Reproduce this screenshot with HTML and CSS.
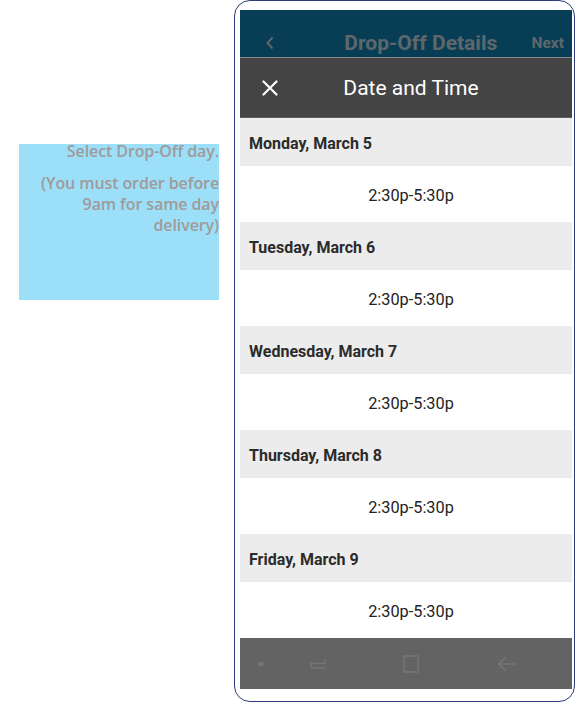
FILE: index.html
```html
<!DOCTYPE html>
<html>
<head>
<meta charset="utf-8">
<link rel="stylesheet" href="styles.css">
</head>
<body>
<div class="page">
  <aside class="note">
    <p class="note-title">Select Drop-Off day.</p>
    <p class="note-body">(You must order before 9am for same day delivery)</p>
  </aside>
  <div class="phone">
    <div class="screen">
      <div class="appbar">
        <svg class="appbar-back" width="12" height="16" viewBox="0 0 12 16"><path d="M8.5 2.5 L3.5 8 L8.5 13.5" stroke="#5e686c" stroke-width="2" fill="none"/></svg>
        <span class="appbar-title">Drop-Off Details</span>
        <span class="appbar-next">Next</span>
      </div>
      <div class="sheet-head">
        <svg class="close" width="16" height="16" viewBox="0 0 16 16"><path d="M1.5 1.5 L14.5 14.5 M14.5 1.5 L1.5 14.5" stroke="#fff" stroke-width="2.2" stroke-linecap="round"/></svg>
        <span class="sheet-title">Date and Time</span>
      </div>
      <div class="list">
        <div class="day">Monday, March 5</div>
        <div class="slot">2:30p-5:30p</div>
        <div class="day">Tuesday, March 6</div>
        <div class="slot">2:30p-5:30p</div>
        <div class="day">Wednesday, March 7</div>
        <div class="slot">2:30p-5:30p</div>
        <div class="day">Thursday, March 8</div>
        <div class="slot">2:30p-5:30p</div>
        <div class="day">Friday, March 9</div>
        <div class="slot">2:30p-5:30p</div>
      </div>
      <div class="navbar">
        <svg width="10" height="10" viewBox="0 0 10 10"><circle cx="5" cy="5" r="2.6" fill="#747474"/></svg>
        <svg width="22" height="20" viewBox="0 0 22 20"><path d="M4 14 L4 9.5 L18 9.5 L18 5 M4 14 L18 14" stroke="#767676" stroke-width="1.5" fill="none"/></svg>
        <svg width="18" height="20" viewBox="0 0 18 20"><rect x="2" y="2" width="14" height="16" stroke="#767676" stroke-width="1.5" fill="none"/></svg>
        <svg width="22" height="20" viewBox="0 0 22 20"><path d="M19 10 L3 10 M9.5 3.5 L3 10 L9.5 16.5" stroke="#767676" stroke-width="1.5" fill="none"/></svg>
      </div>
    </div>
  </div>
</div>
</body>
</html>
```
FILE: styles.css
```css
* { box-sizing: border-box; }
html, body { margin: 0; padding: 0; background: #fff; }
body { width: 576px; height: 703px; overflow: hidden; font-family: Roboto, "Liberation Sans", sans-serif; }
.page { display: flex; align-items: flex-start; }

.note {
  margin: 144px 0 0 19px;
  width: 200px;
  height: 156px;
  background: #9cdff9;
  text-align: right;
  font-family: "Open Sans", "Liberation Sans", sans-serif;
  font-weight: 600;
  color: #a09a9a;
  font-size: 16px;
  letter-spacing: -0.1px;
  padding-right: 0;
}
.note p { margin: 0; }
.note-title { line-height: 16px; margin-top: -1px !important; }
.note-body { line-height: 21px; margin-top: 14px !important; padding-left: 12px; }

.phone {
  margin-left: 15px;
  width: 341px;
  height: 702px;
  border: 1.3px solid #2e3d7e;
  border-radius: 16px;
  padding: 9px 2px 11px 5px;
}
.screen { width: 332px; height: 679px; display: flex; flex-direction: column; }

.appbar {
  height: 47px;
  background: #073e56;
  display: flex;
  align-items: center;
  padding: 19px 8px 0 24px;
  color: #5e686c;
  font-weight: 700;
}
.appbar-back { flex: none; }
.appbar-title { flex: 1; text-align: center; font-size: 21px; padding-left: 34px; }
.appbar-next { font-size: 15.5px; }

.sheet-head {
  height: 61px;
  background: #444;
  border-top: 1px solid #868c8e;
  border-bottom: 1px solid #5c5c5c;
  display: flex;
  align-items: center;
  padding-left: 22px;
  color: #fff;
}
.close { flex: none; }
.sheet-title { flex: 1; text-align: center; font-size: 21px; padding-right: 28px; padding-top: 1px; }

.list { display: flex; flex-direction: column; }
.day {
  height: 48px;
  background: #ececec;
  display: flex;
  align-items: center;
  padding-left: 9px;
  padding-top: 2px;
  font-size: 16px;
  font-weight: 700;
  color: #2b2b2b;
}
.slot {
  height: 56px;
  background: #fff;
  display: flex;
  align-items: center;
  justify-content: center;
  font-size: 16.3px;
  color: #222;
  padding-left: 10px;
  padding-top: 2px;
}

.navbar {
  height: 51px;
  background: #636363;
  display: grid;
  grid-template-columns: 42px 72px 114px 78px;
  align-items: center;
  justify-items: center;
}
```
